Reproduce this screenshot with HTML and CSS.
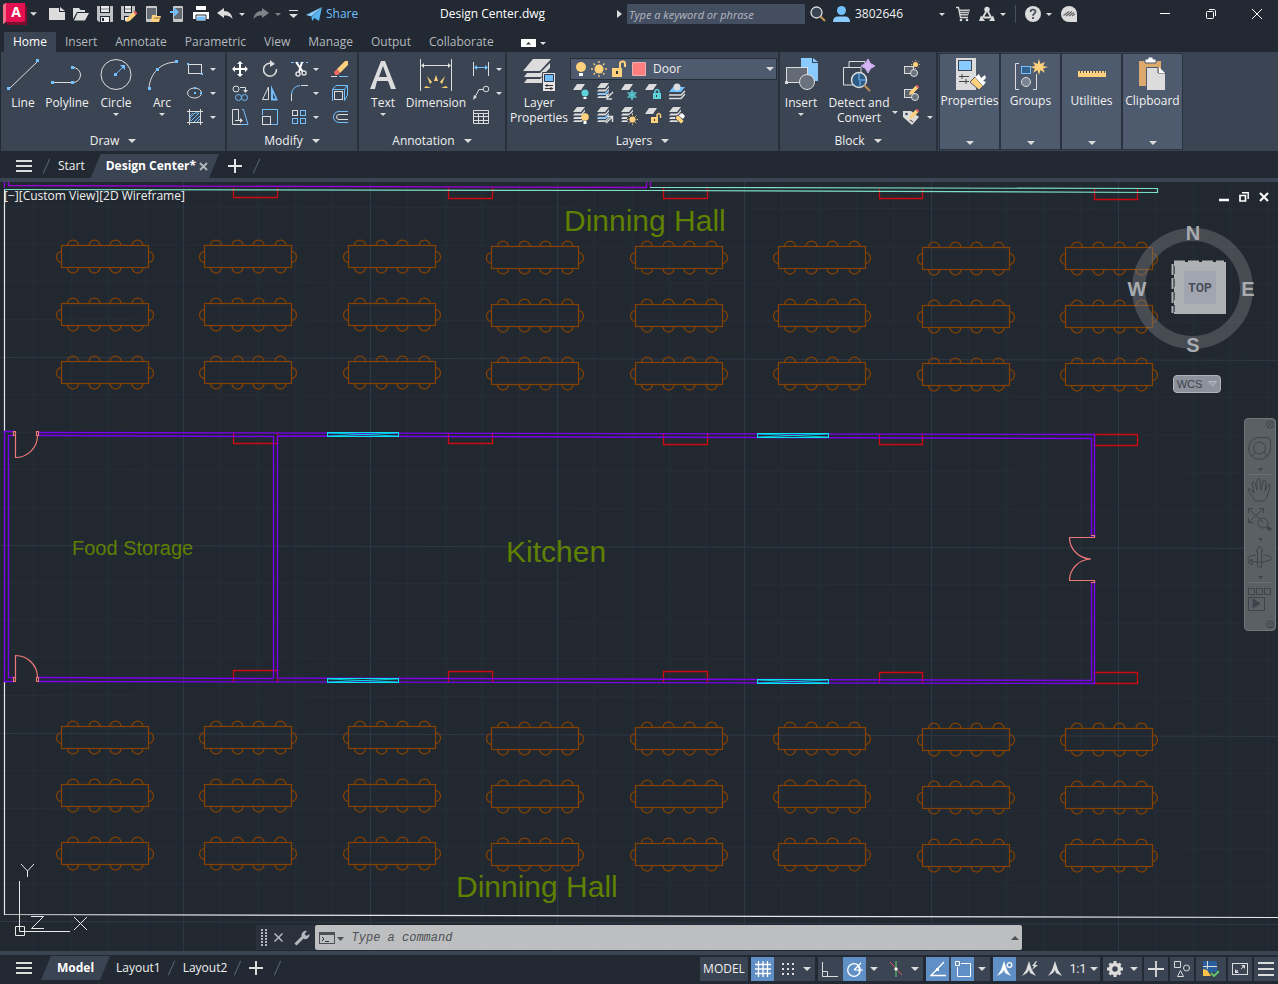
FILE: index.html
```html
<!DOCTYPE html>
<html lang="en">
<head>
<meta charset="utf-8">
<title>Design Center.dwg</title>
<link rel="stylesheet" href="styles.css">
</head>
<body>
<svg class="defs" aria-hidden="true">
  <defs>
    <symbol id="caret" viewBox="0 0 8 4"><path d="M0 0H8L4 4Z" fill="#dcdcdc"/></symbol>
    <symbol id="sheet" viewBox="0 0 12 6"><path d="M4 0H12L8 6H0Z"/></symbol>
    <symbol id="sheets" viewBox="0 0 13 15"><path d="M4 0H12L8 5H0ZM0 8.500L1.500 6.500H8.500L12 2.500V4.500L8.500 8.500ZM0 12L1.500 10H8.500L12 6V8L8.500 12ZM0 15L1.500 13.200H8.500L12 9.500V11L8.500 15Z" fill="#dcdcdc"/></symbol>
    <symbol id="sun" viewBox="0 0 16 16"><circle cx="8" cy="8" r="4.500" fill="#ffd17c"/><path d="M8 0V2M8 14V16M0 8H2M14 8H16M2.500 2.500L4 4M12 12L13.500 13.500M13.500 2.500L12 4M4 12L2.500 13.500" stroke="#ffd17c" stroke-width="1.300"/></symbol>
    <symbol id="pencil" viewBox="0 0 12 12"><path d="M0 12L1 8L8 1L11 4L4 11Z" fill="#ffd17c"/><path d="M8 1L9 0H10L12 2V3L11 4Z" fill="#ee5c64"/></symbol>
    <g id="table" fill="none" stroke="#864200" stroke-width="1.250">
      <rect x="61.500" y="245.500" width="87" height="22"/>
      <path d="M67.500 245.500A5.500 5.500 0 0 1 78.500 245.500M89 245.500A5.500 5.500 0 0 1 100 245.500M110 245.500A5.500 5.500 0 0 1 121 245.500M132 245.500A5.500 5.500 0 0 1 143 245.500M67.500 267.500A5.500 5.500 0 0 0 78.500 267.500M89 267.500A5.500 5.500 0 0 0 100 267.500M110 267.500A5.500 5.500 0 0 0 121 267.500M132 267.500A5.500 5.500 0 0 0 143 267.500M61.500 251.500A5 5.500 0 0 0 61.500 262.500M148.500 251.500A5 5.500 0 0 1 148.500 262.500"/>
    </g>
    <g id="tablerow">
      <use href="#table"/><use href="#table" x="143"/><use href="#table" x="287"/><use href="#table" x="430" y="1"/>
      <use href="#table" x="574" y="1"/><use href="#table" x="717" y="1"/><use href="#table" x="861" y="2"/><use href="#table" x="1004" y="2"/>
    </g>
    <g id="window" fill="none" stroke="#00e5f0">
      <rect x="327.500" y="432.500" width="71" height="4"/><path d="M328 433L398 436M328 436L398 433" stroke-width=".8"/>
    </g>
    <pattern id="grid" width="187" height="188" patternUnits="userSpaceOnUse" x="183" y="169">
      <path d="M37.500 0V188M75.500 0V188M112.500 0V188M149.500 0V188M0 37.500H187M0 75.500H187M0 112.500H187M0 150.500H187" stroke="#262d38" fill="none"/>
      <path d="M.5 0V188M0 .5H187" stroke="#2f3747" fill="none"/>
    </pattern>
  </defs>
</svg>

<header class="titlebar">
  <button class="split logo" aria-label="Application menu">
    <svg width="24" height="23" viewBox="0 0 24 23"><path d="M2 3H24V22H4Z" fill="#7c0e31"/><path d="M0 2L3 0V19L0 21Z" fill="#f4788c"/><path d="M3 0H22V18L19 19H0Z" fill="#e51050"/><path d="M0 2L3 0V18L0 20Z" fill="#ee6f88"/><text x="13" y="14" text-anchor="middle" class="logo-letter">A</text></svg>
    <svg class="caret"><use href="#caret"/></svg>
  </button>
  <div class="quick">
    <button aria-label="New"><svg class="i16" viewBox="0 0 16 16"><path d="M0 2H10V6H16V14H0Z" fill="#dcdcdc"/><path d="M11 1L16 5H11Z" fill="#dcdcdc"/></svg></button>
    <button aria-label="Open"><svg class="i16" viewBox="0 0 16 16"><path d="M0 2H6L7.500 4H12V6H4L0 13Z" fill="#dcdcdc"/><path d="M4.500 7H16L12 14.500H1Z" fill="#dcdcdc"/></svg></button>
    <button aria-label="Save"><svg class="i16" viewBox="0 0 16 16"><path d="M0 0H3V7H13V0H16V16H2L0 14Z" fill="#bfc1c4"/><path d="M4 0H12V6H4Z" fill="#e9e9e9"/><path d="M4 3H12" stroke="#7a7f86"/><path d="M3 10H13V16H3Z" fill="#222933"/><path d="M4 11H12V16H4Z" fill="#eee"/><path d="M5 12H7V15H5Z" fill="#222933"/></svg></button>
    <button aria-label="Save as"><svg class="i16" viewBox="0 0 16 16"><path d="M0 0H3V7H11V0H14V8L7 14H0Z" fill="#bfc1c4"/><path d="M4 0H10V6H4Z" fill="#e9e9e9"/><path d="M4 3H10" stroke="#7a7f86"/><path d="M3 10H9V15H3Z" fill="#222933"/><path d="M4 11H7V15H4Z" fill="#eee"/><use href="#pencil" x="5" y="5" width="11" height="11"/></svg></button>
    <button aria-label="Open from web and mobile"><svg class="i16" viewBox="0 0 16 16"><rect x="1" y="0" width="11" height="16" rx="1" fill="#c8c8c8"/><rect x="2" y="2" width="9" height="11" fill="#646a72"/><path d="M7 9H11L12 10H16L14 16H6Z" fill="#ffd17c"/><path d="M9 12H15" stroke="#8c6e38"/></svg></button>
    <button aria-label="Save to web and mobile"><svg class="i16" viewBox="0 0 16 16"><rect x="4" y="0" width="10" height="16" rx="1" fill="#c8c8c8"/><rect x="5" y="2" width="8" height="11" fill="#646a72"/><path d="M1 6H8M5 2.500L8.500 6L5 9.500" stroke="#72c0ff" stroke-width="2" fill="none"/></svg></button>
    <button aria-label="Plot"><svg class="i16" viewBox="0 0 16 16"><path d="M3 0H13V4H3ZM0 6H16V13H0Z" fill="#fff"/><path d="M3 9H13V15H3Z" fill="#fff" stroke="#222933"/><path d="M4 10.500H12V14H4Z" fill="#72c0ff"/></svg></button>
    <button class="split" aria-label="Undo"><svg class="i16" viewBox="0 0 16 16"><path d="M0 7L7 2V5C12 5 15 8 15.500 13C13 10 11 9.500 7 9.500V12Z" fill="#dcdcdc"/></svg><svg class="caret"><use href="#caret"/></svg></button>
    <button class="split dim" aria-label="Redo"><svg class="i16" viewBox="0 0 16 16"><path d="M16 7L9 2V5C4 5 1 8 .5 13C3 10 5 9.500 9 9.500V12Z" fill="#dcdcdc"/></svg><svg class="caret"><use href="#caret"/></svg></button>
    <button aria-label="Customize quick access"><svg width="9" height="16" viewBox="0 0 9 16"><path d="M0 4.500H9" stroke="#dcdcdc"/><path d="M0 8H9L4.500 12Z" fill="#dcdcdc"/></svg></button>
    <button class="share"><svg class="i16" viewBox="0 0 16 16"><path d="M0 9L16 1L5.500 10.500Z" fill="#89cbff"/><path d="M16 1L13 15L8.500 12L6 15L5.500 11Z" fill="#58b4f0"/></svg>Share</button>
  </div>
  <h1 class="doc">Design Center.dwg</h1>
  <form class="search" role="search">
    <svg width="5" height="8" viewBox="0 0 5 8"><path d="M0 0L5 4L0 8Z" fill="#dcdcdc"/></svg>
    <input type="text" placeholder="Type a keyword or phrase" aria-label="Search">
    <button type="button" aria-label="Find"><svg class="i16" viewBox="0 0 16 16"><circle cx="6.500" cy="6.500" r="5.500" fill="#3b4453" stroke="#dcdcdc" stroke-width="1.300"/><path d="M10.500 10.500L15 15" stroke="#c7965a" stroke-width="2"/></svg></button>
  </form>
  <button class="user"><svg width="18" height="16" viewBox="0 0 18 16"><circle cx="8.500" cy="4.500" r="4.500" fill="#72c0ff"/><path d="M0 16Q0 10.500 5 10.500H12Q17 10.500 17 16Z" fill="#89cbff"/></svg><span>3802646</span><svg class="caret"><use href="#caret"/></svg></button>
  <div class="account">
    <button aria-label="Store"><svg width="14" height="16" viewBox="0 0 14 16"><path d="M0 1.500H2.500L4.500 11.500H12" fill="none" stroke="#dcdcdc" stroke-width="1.300"/><path d="M3 3.500H14L12 9.500H4Z" fill="#c8c8c8"/><path d="M4 5.500H13M4.500 7.500H12" stroke="#555c66"/><circle cx="5" cy="14" r="1.300" fill="#dcdcdc"/><circle cx="11" cy="14" r="1.300" fill="#dcdcdc"/></svg></button>
    <button class="split" aria-label="Apps"><svg class="i16" viewBox="0 0 16 16"><path d="M8 4L3.500 12M8 4L12.500 12M5 11.500H11" stroke="#dcdcdc" stroke-width="1.800"/><circle cx="8" cy="3.500" r="2.700" fill="#dcdcdc"/><path d="M0 15L2 9.500L6 15ZM16 15L14 9.500L10 15Z" fill="#dcdcdc"/></svg><svg class="caret"><use href="#caret"/></svg></button>
    <span class="rule"></span>
    <button class="split" aria-label="Help"><svg class="i16" viewBox="0 0 16 16"><circle cx="8" cy="8" r="8" fill="#dcdcdc"/><path d="M5.500 6C5.500 2.700 10.500 2.700 10.500 5.800C10.500 7.600 8 7.600 8 9.700M8 11V13" fill="none" stroke="#414854" stroke-width="1.700"/></svg><svg class="caret"><use href="#caret"/></svg></button>
    <button aria-label="Feedback"><svg class="i16" viewBox="0 0 16 16"><path d="M8 0A8 8 0 0 0 8 16H16V8A8 8 0 0 0 8 0Z" fill="#dcdcdc"/><path d="M2.500 9.500L8 5.500M5 10L11 5.500M8 10L13 6.500M11 10L14 8" fill="none" stroke="#666" stroke-width="1.200"/></svg></button>
  </div>
  <div class="winctl">
    <button aria-label="Minimize"><svg width="12" height="12" viewBox="0 0 12 12"><path d="M1 5.500H11" stroke="#fff"/></svg></button>
    <button aria-label="Restore"><svg width="12" height="12" viewBox="0 0 12 12"><rect x="1.500" y="3.500" width="7" height="7" rx="1" fill="none" stroke="#fff"/><path d="M4 1.500H9.500L10.500 2.500V8" fill="none" stroke="#fff"/></svg></button>
    <button aria-label="Close"><svg width="12" height="12" viewBox="0 0 12 12"><path d="M1 1L11 11M11 1L1 11" stroke="#fff"/></svg></button>
  </div>
</header>

<nav class="tabs">
  <a href="#" class="active">Home</a><a href="#">Insert</a><a href="#">Annotate</a><a href="#">Parametric</a><a href="#">View</a><a href="#">Manage</a><a href="#">Output</a><a href="#">Collaborate</a>
  <button class="split" aria-label="Minimize ribbon"><svg width="15" height="8" viewBox="0 0 15 8"><path d="M0 0H15V8H0Z" fill="#fff"/><path d="M5 5.500H10L7.500 3Z" fill="#333"/></svg><svg class="caret tiny"><use href="#caret"/></svg></button>
</nav>

<main class="ribbon">
  <section class="panel draw">
    <div class="tools">
      <button class="big w44"><svg class="i36" viewBox="0 0 36 36"><path d="M4 32L33 4" class="s"/><path d="M2 30H5V33H2ZM31 2H34V5H31Z" class="fb"/></svg>Line</button>
      <button class="big w44"><svg class="i36" viewBox="0 0 36 36"><path d="M3 25.500H24M24 10.500A7.500 7.500 0 0 1 24 25.500" class="s"/><path d="M2 24H5V27H2ZM22 24H25V27H22ZM22 9H25V12H22Z" class="fb"/></svg>Polyline</button>
      <button class="big w54"><svg class="i36" viewBox="0 0 36 36"><circle cx="18" cy="17.500" r="15" class="s"/><path d="M18 17L25 10" class="b"/><path d="M16 16H19V19H16ZM27 8V13L22 8Z" class="fb"/></svg>Circle<svg class="caret tiny"><use href="#caret"/></svg></button>
      <button class="big w38"><svg class="i36" viewBox="0 0 36 36"><path d="M5 31C6 17 16 5 33 5" class="s"/><path d="M4 30H7V33H4ZM12 11H15V14H12ZM31 3H34V6H31Z" class="fb"/></svg>Arc<svg class="caret tiny"><use href="#caret"/></svg></button>
      <div class="small one">
        <button class="split" aria-label="Rectangle"><svg class="i18" viewBox="0 0 18 18"><rect x="2.500" y="4.500" width="13" height="9" class="s"/><path d="M1 3H3V5H1ZM15 13H17V15H15Z" class="fb"/></svg><svg class="caret tiny"><use href="#caret"/></svg></button>
        <button class="split" aria-label="Ellipse"><svg class="i18" viewBox="0 0 18 18"><ellipse cx="8.500" cy="9" rx="7" ry="5" class="s"/><path d="M8 3H10V5H8ZM8 8H10V10H8ZM14 8H16V10H14Z" class="fb"/></svg><svg class="caret tiny"><use href="#caret"/></svg></button>
        <button class="split" aria-label="Hatch"><svg class="i18" viewBox="0 0 18 18"><path d="M4 13V10L9 5H13M5 13L13 5M8 14L14 8M11 14L14 11M4 8L7 5" class="b"/><path d="M1 3.500H17M1 14.500H17M3.500 1V17M14.500 1V17" class="s"/></svg><svg class="caret tiny"><use href="#caret"/></svg></button>
      </div>
    </div>
    <button class="ptitle">Draw<svg class="caret"><use href="#caret"/></svg></button>
  </section>

  <section class="panel modify">
    <div class="tools">
      <div class="small four">
        <button aria-label="Move"><svg class="i18" viewBox="0 0 18 18"><path d="M9 3V15M3 9H15" stroke="#fff" stroke-width="2"/><path d="M9 1L12 4H6ZM9 17L12 14H6ZM1 9L4 6V12ZM17 9L14 6V12Z" fill="#fff"/></svg></button>
        <button aria-label="Rotate"><svg class="i18" viewBox="0 0 18 18"><path d="M11 3.500A6.500 6.500 0 1 0 15.500 9" class="s2"/><path d="M9 0L14 4L9 7Z" class="f"/></svg></button>
        <button class="split" aria-label="Trim"><svg class="i18" viewBox="0 0 18 18"><path d="M0 2.500H17" class="b" stroke-dasharray="3 2"/><path d="M5 2L12 12M11 2L8 12" stroke="#fff" stroke-width="2"/><circle cx="7" cy="14" r="2" class="s2"/><circle cx="13" cy="13" r="2" class="s2"/></svg><svg class="caret tiny"><use href="#caret"/></svg></button>
        <button aria-label="Erase"><svg class="i18" viewBox="0 0 18 18"><path d="M6 9L14 1H17V5L9 13Z" fill="#ffd17c"/><path d="M6 9L9 13L7 15H4L3 12Z" fill="#ee6a64"/><path d="M0 16.500H6" class="s"/><path d="M8 16.500H17" class="b"/></svg></button>
        <button aria-label="Copy"><svg class="i18" viewBox="0 0 18 18"><circle cx="5" cy="5" r="3" class="s"/><circle cx="7.500" cy="13.500" r="3" class="b"/><circle cx="13.500" cy="13.500" r="3" class="b"/><path d="M9 3.500H14.500V7" class="s"/><path d="M12 6H17L14.500 9Z" class="f"/></svg></button>
        <button aria-label="Mirror"><svg class="i18" viewBox="0 0 18 18"><path d="M7.500 3V15.500H1.500Z" class="s"/><path d="M10 1V16.500H17Z" fill="#72c0ff"/><path d="M12 9V14.500H14.500Z" fill="#3b4453"/></svg></button>
        <button class="split" aria-label="Fillet"><svg class="i18" viewBox="0 0 18 18"><path d="M.5 10A9 9 0 0 1 9 1.500" class="b"/><path d="M10 1.500H17M.5 10V17" class="s"/></svg><svg class="caret tiny"><use href="#caret"/></svg></button>
        <button aria-label="Explode"><svg class="i18" viewBox="0 0 18 18"><rect x="3.500" y="7.500" width="8" height="8" class="s"/><path d="M1.500 17V5.500L5 1.500H16.500V11L13.500 16.500V5.500H1.500M13.500 5.500L16 1.500" class="b"/></svg></button>
        <button aria-label="Stretch"><svg class="i18" viewBox="0 0 18 18"><path d="M10 16.500H1.500V1.500H7.500V12" class="s"/><path d="M11 1.500H12.500L17 16.500H10" class="b"/><path d="M4 12.500H10" class="s"/><path d="M9 10L12 12.500L9 15Z" class="f"/></svg></button>
        <button aria-label="Scale"><svg class="i18" viewBox="0 0 18 18"><path d="M1 1.500H16.500V16.500H10M1.500 7V1.500" class="b"/><rect x="1.500" y="8.500" width="8" height="8" class="s"/></svg></button>
        <button class="split" aria-label="Array"><svg class="i18" viewBox="0 0 18 18"><rect x="1.500" y="2.500" width="5" height="5" class="s"/><rect x="9.500" y="2.500" width="5" height="5" class="b"/><rect x="1.500" y="10.500" width="5" height="5" class="b"/><rect x="9.500" y="10.500" width="5" height="5" class="b"/></svg><svg class="caret tiny"><use href="#caret"/></svg></button>
        <button aria-label="Offset"><svg class="i18" viewBox="0 0 18 18"><path d="M17 3.500H8A5.500 5.500 0 0 0 8 14.500H17" class="b"/><path d="M17 6.500H8A2.500 2.500 0 0 0 8 11.500H17" class="s"/></svg></button>
      </div>
    </div>
    <button class="ptitle">Modify<svg class="caret"><use href="#caret"/></svg></button>
  </section>

  <section class="panel annotation">
    <div class="tools">
      <button class="big w44"><svg class="i36" viewBox="0 0 36 36"><path d="M5 32L16 4H20L31 32H26L23 24H12L10 32ZM14 20H22L18 9Z" fill="#dcdcdc" fill-rule="evenodd"/></svg>Text<svg class="caret tiny"><use href="#caret"/></svg></button>
      <button class="big w62"><svg class="i36" viewBox="0 0 36 36"><path d="M2.500 2V34M33.500 2V34M4 8.500H32" class="s"/><path d="M3 8.500L6 6V11ZM33 8.500L30 6V11Z" class="f"/><path d="M18 18L20 24H16ZM9 19L14 25L12 27ZM27 19L22 25L24 27ZM6 31L8 29L13 31ZM30 31L28 29L23 31Z" class="y"/></svg>Dimension</button>
      <div class="small one">
        <button class="split" aria-label="Linear"><svg class="i18" viewBox="0 0 18 18"><path d="M1.500 2V16M16.500 2V16" class="s"/><path d="M3 7.500H15" class="b"/><path d="M2 7.500L5 5V10ZM16 7.500L13 5V10Z" class="fb"/></svg><svg class="caret tiny"><use href="#caret"/></svg></button>
        <button class="split" aria-label="Leader"><svg class="i18" viewBox="0 0 18 18"><circle cx="14" cy="5" r="2.800" class="s"/><path d="M11 5.500H7L2.500 14" class="s"/><path d="M1 16L2 11L5 13Z" class="f"/></svg><svg class="caret tiny"><use href="#caret"/></svg></button>
        <button aria-label="Table"><svg class="i18" viewBox="0 0 18 18"><path d="M1.500 2.500H16.500V15.500H1.500ZM1.500 5.500H16.500M1.500 8.500H16.500M1.500 12.500H16.500M6.500 5.500V15M11.500 5.500V15" class="s"/></svg></button>
      </div>
    </div>
    <button class="ptitle">Annotation<svg class="caret"><use href="#caret"/></svg></button>
  </section>

  <section class="panel layers">
    <div class="tools">
      <button class="big w62"><svg class="i36" viewBox="0 0 36 36"><path d="M12 2H30L19 14H2Z" class="f"/><path d="M3 20L6 16H19L29 6V11L20 20ZM3 26L6 22H19L24 17V26Z" class="f"/><path d="M21.500 15.500H34.500V34.500H21.500Z" fill="#e4e4e4" stroke="#3b4453"/><path d="M23.500 17.500H32.500V24.500H23.500Z" fill="#72c0ff" stroke="#30394a"/><path d="M24 28.500H32M24 31.500H32M26 27V30M30 30V33" stroke="#333"/></svg>Layer<br>Properties</button>
      <div class="laycol">
        <div class="laysel">
          <svg width="80" height="18" viewBox="0 0 80 18"><circle cx="8" cy="7" r="5" fill="#ffd17c"/><path d="M6 13H10V16H6Z" fill="#fff"/><use href="#sun" x="18" y="1" width="16" height="16"/><path d="M39 8H49V17H39Z" fill="#ffd17c"/><path d="M47 8V3.500Q47 1.500 50 1.500Q52 1.500 52 4V7" fill="none" stroke="#ffd17c" stroke-width="2"/><path d="M43 11H45V14H43Z" fill="#333"/><path d="M59.500 2.500H72.500V15.500H59.500Z" fill="#ff7f7f" stroke="#e8b0b0"/></svg>
          <select aria-label="Layer"><option>Door</option><option>Wall</option></select>
          <svg class="caret"><use href="#caret"/></svg>
        </div>
        <div class="laygrid">
          <button aria-label="Layer off"><svg class="i18" viewBox="0 0 18 18"><use href="#sheet" width="12" height="6" x="1" y="1" fill="#dcdcdc"/><circle cx="13" cy="10" r="3.500" fill="#5fd3dc"/><path d="M11.500 14H14.500V16H11.500Z" fill="#fff"/></svg></button>
          <button aria-label="Isolate layer"><svg class="i18" viewBox="0 0 18 18"><use href="#sheets" width="13" height="15" x="1"/><path d="M1.500 11H9L12.500 7.500" class="b" stroke-width="1.500"/><path d="M17 9L11 15M11 11V16H16" class="s2"/></svg></button>
          <button aria-label="Freeze layer"><svg class="i18" viewBox="0 0 18 18"><use href="#sheet" width="12" height="6" x="1" y="1" fill="#dcdcdc"/><path d="M12 7V17M7.500 9.500L16.500 14.500M7.500 14.500L16.500 9.500" stroke="#5fd3dc" stroke-width="1.300"/><circle cx="12" cy="12" r="3" fill="none" stroke="#5fd3dc"/></svg></button>
          <button aria-label="Lock layer"><svg class="i18" viewBox="0 0 18 18"><use href="#sheet" width="12" height="6" x="1" y="1" fill="#dcdcdc"/><path d="M9 10H17V16H9Z" fill="#5fd3dc"/><path d="M11 10V8Q13 5 15 8V10" fill="none" stroke="#5fd3dc" stroke-width="1.500"/><path d="M12.500 12V14" stroke="#333"/></svg></button>
          <button aria-label="Make current"><svg class="i18" viewBox="0 0 18 18"><path d="M5 4H17L13 9H1Z" fill="#72c0ff"/><circle cx="9" cy="4" r="3.500" class="f"/><path d="M1 12H13L17 8M1 15.500H13L17 11" class="s2"/></svg></button>
          <button aria-label="Turn all layers on"><svg class="i18" viewBox="0 0 18 18"><use href="#sheets" width="13" height="15" x="1"/><circle cx="13" cy="10" r="3.800" fill="#ffd17c"/><path d="M11.500 14H14.500V17H11.500Z" fill="#fff"/></svg></button>
          <button aria-label="Unisolate"><svg class="i18" viewBox="0 0 18 18"><use href="#sheets" width="13" height="15" x="1"/><path d="M1.500 11H9L12.500 7.500" class="b" stroke-width="1.500"/><path d="M10 16L16 10M11 9.500H16.500V15" class="s2"/></svg></button>
          <button aria-label="Thaw all layers"><svg class="i18" viewBox="0 0 18 18"><use href="#sheets" width="13" height="15" x="1"/><circle cx="12" cy="12" r="5" fill="#3b4453"/><use href="#sun" x="7" y="7" width="11" height="11"/></svg></button>
          <button aria-label="Unlock layer"><svg class="i18" viewBox="0 0 18 18"><use href="#sheet" width="12" height="6" x="1" y="1" fill="#dcdcdc"/><path d="M7 10H14V16H7Z" fill="#ffd17c"/><path d="M13 10V8Q15 5 16.500 8V11" fill="none" stroke="#ffd17c" stroke-width="1.500"/><path d="M10.500 12V14" stroke="#333"/></svg></button>
          <button aria-label="Match layer"><svg class="i18" viewBox="0 0 18 18"><use href="#sheets" width="13" height="15" x="1"/><path d="M7 11L10 8L16 14L13 17Z" fill="#ffd17c" stroke="#3b4453" stroke-width=".7"/><path d="M11 9L14 6L17 9L15 12Z" fill="#fff"/></svg></button>
        </div>
      </div>
    </div>
    <button class="ptitle">Layers<svg class="caret"><use href="#caret"/></svg></button>
  </section>

  <section class="panel block">
    <div class="tools">
      <button class="big w42"><svg class="i36" viewBox="0 0 36 36"><path d="M18 1H29V6H35V24H18Z" fill="#89cbff"/><path d="M30 1L35 5H30Z" fill="#89cbff"/><rect x="3.500" y="10.500" width="21" height="15" fill="#646b77" stroke="#dcdcdc"/><circle cx="24" cy="25" r="7.500" fill="#6a727e" stroke="#dcdcdc"/><path d="M2 24H5V27H2Z" class="f"/></svg>Insert<svg class="caret tiny"><use href="#caret"/></svg></button>
      <button class="big w74"><svg class="i36" viewBox="0 0 36 36"><path d="M14 28H2.500V10.500H20V16M8 10V4.500H24V8" class="s"/><path d="M14 28H20V17" class="b"/><circle cx="18" cy="23" r="7.500" fill="#2c5b86" stroke="#dcdcdc" stroke-width="1.500"/><path d="M18 16V23H25M19 24V29" class="b"/><path d="M23 28L29 34" stroke="#b98c58" stroke-width="2"/><path d="M27 2Q28.500 7.500 34 9Q28.500 10.500 27 16Q25.500 10.500 20 9Q25.500 7.500 27 2Z" fill="#d6b5f7" stroke="#d6b5f7"/></svg>Detect and<br>Convert</button>
      <svg class="caret tiny mid"><use href="#caret"/></svg>
      <div class="small one">
        <button aria-label="Create block"><svg class="i18" viewBox="0 0 18 18"><rect x="1.500" y="6.500" width="9" height="7" fill="#5d6470" stroke="#dcdcdc"/><circle cx="11" cy="13" r="3.500" fill="#6a727e" stroke="#dcdcdc"/><use href="#sun" x="8" y="0" width="9" height="9"/></svg></button>
        <button aria-label="Edit block"><svg class="i18" viewBox="0 0 18 18"><rect x="1.500" y="5.500" width="9" height="8" fill="#5d6470" stroke="#dcdcdc"/><circle cx="12" cy="13" r="3.500" fill="#6a727e" stroke="#dcdcdc"/><use href="#pencil" x="6" y="1" width="10" height="10"/></svg></button>
        <button class="split" aria-label="Edit attributes"><svg class="i18" viewBox="0 0 18 18"><path d="M0 3H8L16 9L9 17L0 9Z" class="f"/><circle cx="3.500" cy="6" r="1.300" fill="#3b4453"/><path d="M7 12L10 14" stroke="#333"/><use href="#pencil" x="6" y="1" width="10" height="10"/></svg><svg class="caret tiny"><use href="#caret"/></svg></button>
      </div>
    </div>
    <button class="ptitle">Block<svg class="caret"><use href="#caret"/></svg></button>
  </section>

  <button class="tile"><svg class="i36" viewBox="0 0 36 36"><path d="M4 2H24V34H4Z" fill="#dcdcdc"/><rect x="6.500" y="4.500" width="13" height="10" fill="#89cbff" stroke="#3b4453"/><path d="M7 20.500H17M7 25.500H17M10 18V23M14 23V28" stroke="#444"/><path d="M18 26L23 21L31 30L27 34Z" fill="#ffd17c" stroke="#4e5a6e"/><path d="M23 21L27 18L29 22L33 19L34 22L31 25L34 26L31 30Z" fill="#fff"/></svg>Properties<svg class="caret"><use href="#caret"/></svg></button>
  <button class="tile"><svg class="i36" viewBox="0 0 36 36"><path d="M6 7.500H2.500V33.500H6M20 33.500H23.500V18" class="s"/><rect x="8.500" y="10.500" width="9" height="7" fill="#35618d" stroke="#72c0ff"/><circle cx="13" cy="26" r="4.500" fill="#7b8492" stroke="#dcdcdc"/><path d="M26 3L27.500 8L32 6L30 10L35 11L30 12.500L32 17L27.500 14L26 19L24.500 14L20 17L22 12.500L17 11L22 10L20 6L24.500 8Z" fill="#ffd17c"/></svg>Groups<svg class="caret"><use href="#caret"/></svg></button>
  <button class="tile"><svg class="i36" viewBox="0 0 36 36"><path d="M4 15H32V21H4Z" fill="#ffd17c"/><path d="M6.500 14V17M9.500 14V17M12.500 14V17M15.500 14V17M18.500 14V17M21.500 14V17M24.500 14V17M27.500 14V17M30.500 14V17" stroke="#4e5a6e"/></svg>Utilities<svg class="caret"><use href="#caret"/></svg></button>
  <button class="tile"><svg class="i36" viewBox="0 0 36 36"><path d="M4 5H26V30H4Z" fill="#dba96c"/><path d="M10 3H13V1H18V3H21V7H10Z" fill="#fff" stroke="#4e5a6e"/><path d="M11.500 11.500H23V17H30.500V34.500H11.500Z" fill="#dcdcdc" stroke="#4e5a6e"/><path d="M24 11L30 17H24Z" fill="#fff"/></svg>Clipboard<svg class="caret"><use href="#caret"/></svg></button>
</main>

<nav class="filetabs">
  <button class="menu" aria-label="File menu"><svg width="16" height="12" viewBox="0 0 16 12"><path d="M0 1H16M0 6H16M0 11H16" stroke="#dcdcdc" stroke-width="2"/></svg></button>
  <span class="slash"></span>
  <a href="#" class="start">Start</a>
  <span class="current"><a href="#">Design Center*</a><button aria-label="Close tab"><svg width="9" height="9" viewBox="0 0 9 9"><path d="M1 1L8 8M8 1L1 8" stroke="#b4b8bf" stroke-width="1.800"/></svg></button></span>
  <button aria-label="New tab"><svg width="14" height="14" viewBox="0 0 14 14"><path d="M7 0V14M0 7H14" stroke="#e6e6e6" stroke-width="2"/></svg></button>
  <span class="slash"></span>
</nav>

<section class="canvas">
  <svg class="drawing" viewBox="0 182 1278 769" preserveAspectRatio="xMinYMin slice">
    <g transform="skewY(0.13)"><rect y="170" width="2600" height="1600" fill="url(#grid)" shape-rendering="crispEdges"/></g>
    <use href="#tablerow"/><use href="#tablerow" y="58"/><use href="#tablerow" y="116"/>
    <use href="#tablerow" y="481"/><use href="#tablerow" y="539"/><use href="#tablerow" y="597"/>
    <g fill="none" stroke="#cc0a10" stroke-width="1.300">
      <path d="M233.500 188V197.500H277.500V188M448.500 188V198.500H492.500V188M663.500 188V198.500H707.500V188M879.500 189V198.500H922.500V189M1094.500 189V199.500H1137.500V189"/>
      <path d="M233.500 433V443.500H277.500V433M448.500 433V443.500H492.500V433M663.500 433V444.500H707.500V433M879.500 434V444.500H922.500V434M1094.500 434.500H1137.500V445.500H1094.500Z"/>
      <path d="M233.500 682V670.500H277.500V682M448.500 682V671.500H492.500V682M663.500 682V671.500H707.500V682M879.500 683V672.500H922.500V683M1094.500 672.500H1137.500V683.500H1094.500Z"/>
    </g>
    <path d="M4.500 190V431M4.500 682V914.500L1278 917.500" fill="none" stroke="#e4e6e8" stroke-width="1.200"/>
    <g fill="none" stroke="#9a00d8" stroke-width="1.300"><path d="M4.500 182V188M8.500 182V185.500L646.500 187.500V182M650.500 182V187"/></g>
    <path d="M4 189.500L650 190.500M650 187.500L1157.500 188.500V192.500L650 190.500" fill="none" stroke="#7be0c8" stroke-width="1.200"/>
    <g fill="none" stroke="#7a00ee" stroke-width="1.400">
      <path d="M14 431.500H4.500V681.500H14M14 435.500H8.500V677.500H14M38 432.500L1094.500 434.500V537M38 435.500L273.500 436.500V678M277.500 436V678L1091.500 680.500V582M277 436L1091.500 438.500V537M38 677.500L273.500 678.500M38 681.500L1094.500 683.500V582"/>
    </g>
    <use href="#window"/><use href="#window" x="430" y="1"/><use href="#window" y="246"/><use href="#window" x="430" y="247"/>
    <g fill="none" stroke="#f07878" stroke-width="1.200">
      <path d="M13.500 431.500H15.500V435.500H13.500ZM36.500 431.500H38.500V435.500H36.500ZM15.500 435.500V457.500A22 22 0 0 0 37.500 435.500"/>
      <path d="M13.500 677.500H15.500V681.500H13.500ZM36.500 677.500H38.500V681.500H36.500ZM15.500 677V655.500A22 22 0 0 1 37.500 677"/>
      <path d="M1091 535.500H1094.500V537.500H1069.500A22 21.500 0 0 0 1091 559A22 21.500 0 0 0 1069.500 580.500H1094.500V582.500H1091"/>
    </g>
    <g class="rooms">
      <text x="564" y="231">Dinning Hall</text><text x="456" y="897">Dinning Hall</text><text x="506" y="562">Kitchen</text><text x="72" y="555" class="lesser">Food Storage</text>
    </g>
    <g fill="none" stroke="#e8e8e8"><path d="M19.500 881V931.500H70M15.500 926.500H24.500V935.500H15.500ZM21 864L27.500 871L34 864M27.500 871V877M31 916.500H43.500L31.500 928.500H44M74 917L87 930M87 917L74 930"/></g>
  </svg>
  <p class="viewlabel">[−][Custom View][2D Wireframe]</p>
  <div class="viewctl">
    <button aria-label="Minimize view"><svg width="10" height="10" viewBox="0 0 10 10"><path d="M0 8H10" stroke="#fff" stroke-width="2.500"/></svg></button>
    <button aria-label="Restore view"><svg width="10" height="10" viewBox="0 0 10 10"><path d="M1 3.500H6.500V9H1Z" fill="none" stroke="#fff" stroke-width="1.700"/><path d="M3 .8H9.200V7" fill="none" stroke="#fff" stroke-width="1.400"/></svg></button>
    <button aria-label="Close view"><svg width="10" height="10" viewBox="0 0 10 10"><path d="M1 1L9 9M9 1L1 9" stroke="#fff" stroke-width="2"/></svg></button>
  </div>
  <div class="cube">
    <svg width="136" height="136" viewBox="1122 221 136 136">
      <circle cx="1192.500" cy="288.500" r="54" fill="none" stroke="#7b7f85" stroke-opacity=".42" stroke-width="13"/>
      <path d="M1174 262H1226V314H1174Z" fill="#aeb1b4"/><path d="M1172.500 264V313M1174 261.500H1224" stroke="#aeb1b4" stroke-dasharray="11 3" stroke-width="2"/><path d="M1174.500 266V312" stroke="#555b62" stroke-dasharray="8 5"/>
      <path d="M1184 271H1216V304H1184Z" fill="#a0a5b0"/>
      <text x="1200" y="292" class="top">TOP</text>
      <g class="compass"><text x="1193" y="240">N</text><text x="1193" y="352">S</text><text x="1137" y="296">W</text><text x="1248" y="296">E</text></g>
    </svg>
    <button class="wcs">WCS<svg width="9" height="6" viewBox="0 0 9 6"><path d="M.5 .5H8.500L4.500 5Z" fill="#9a9eab" stroke="#b2b6be"/></svg></button>
  </div>
  <div class="navbar">
    <svg width="32" height="213" viewBox="2 1 32 213" fill="none" stroke="#3d444d">
      <circle cx="27" cy="6.500" r="3.500"/><path d="M25 4.500L29 8.500M29 4.500L25 8.500"/>
      <path d="M17 19.500H24Q27.500 19.500 27.500 24V31A11 11 0 1 1 17 19.500ZM9 38L12.500 34M24.500 38L21 34"/><circle cx="16.500" cy="30" r="6"/>
      <path d="M15 50H20L17.500 53ZM15 120H20L17.500 123ZM15 158H20L17.500 161Z" fill="#3d444d" stroke="none"/>
      <path d="M4 56.500H30M4 164.500H30" stroke="#6b7075"/>
      <path d="M12 83C9 77 5 74 5 71Q8 70 11 75L9 65Q10 62 12 65L14 72L14 62Q16 59 17 62L18 72L20 63Q22 61 23 64L22 73L25 67Q28 66 27 69L24 79L21 83Z"/>
      <path d="M6 91L20 104M20 91L6 104M5.500 95V90.500H10M16 90.500H20.500V95M5.500 100V104.500H10"/><circle cx="20" cy="105" r="5"/><path d="M24 109L28 112" stroke-width="3"/>
      <path d="M13 133L16.500 128L20 133H18.500V149H14.500V133ZM13 137C2 138 2 143 14 144H20C31 142 31 138 20 137M9 141V147L5 144Z"/>
      <path d="M5.500 170.500H11.500V176.500H5.500ZM13.500 170.500H19.500V176.500H13.500ZM21.500 170.500H27.500V176.500H21.500ZM5.500 179.500H21.500V192.500H5.500Z"/><path d="M10 181V190L17 185.500Z" fill="#3d444d"/>
      <circle cx="27" cy="206.500" r="3.500"/><path d="M25 206H29M25.500 208L27 209.500L28.500 208"/>
    </svg>
  </div>
  <div class="command">
    <div class="grip">
      <svg width="6" height="18" viewBox="0 0 6 18"><path d="M1 0V18M5 0V18" stroke="#b4b8bf" stroke-width="2" stroke-dasharray="2 1"/></svg>
      <button aria-label="Close command line"><svg width="9" height="9" viewBox="0 0 9 9"><path d="M.5 .5L8.500 8.500M8.500 .5L.5 8.500" stroke="#b4b8bf" stroke-width="1.500"/></svg></button>
      <button aria-label="Customize"><svg class="i16" viewBox="0 0 16 16"><path d="M1.500 14.500L10 6" stroke="#b4b8bf" stroke-width="3"/><path d="M13 1A4.500 4.500 0 0 0 7.500 6L10 9A4.500 4.500 0 0 0 15.500 4L12.500 6L10.500 4Z" fill="#b4b8bf"/></svg></button>
    </div>
    <div class="entry">
      <svg width="26" height="14" viewBox="0 0 26 14"><rect x=".5" y="1.500" width="15" height="11" fill="none" stroke="#4c4f54"/><path d="M1 3H15" stroke="#4c4f54" stroke-width="2"/><path d="M3 6L5 8L3 10M6 10.500H10" stroke="#333" fill="none"/><path d="M18 6H25L21.500 10Z" fill="#4c4f54"/></svg>
      <input type="text" placeholder="Type a command" aria-label="Command">
      <svg width="8" height="4" viewBox="0 0 8 4"><path d="M0 4H8L4 0Z" fill="#4c4f54"/></svg>
    </div>
  </div>
</section>

<footer class="status">
  <nav class="layouts">
    <button class="menu" aria-label="Layout menu"><svg width="16" height="12" viewBox="0 0 16 12"><path d="M0 1H16M0 6H16M0 11H16" stroke="#dcdcdc" stroke-width="2"/></svg></button>
    <a href="#" class="model">Model</a><a href="#" class="lay">Layout1</a><span class="slash"></span><a href="#" class="lay">Layout2</a><span class="slash"></span>
    <button class="plus" aria-label="New layout"><svg width="14" height="14" viewBox="0 0 14 14"><path d="M7 0V14M0 7H14" stroke="#dcdcdc" stroke-width="2"/></svg></button><span class="slash last"></span>
  </nav>
  <div class="modes">
    <button class="m48">MODEL</button>
    <div class="seg"><button class="on" aria-label="Grid"><svg class="i16" viewBox="0 0 16 16"><path d="M3.500 0V16M8 0V16M12.500 0V16M0 3.500H16M0 8H16M0 12.500H16" stroke="#fff" stroke-width="1.300"/></svg></button><button aria-label="Snap"><svg class="i16" viewBox="0 0 16 16"><path d="M2 3H16M2 8H16M2 13H16" stroke="#dcdcdc" stroke-width="2" stroke-dasharray="2 3"/></svg></button><button class="dd" aria-label="Snap options"><svg class="caret"><use href="#caret"/></svg></button></div>
    <div class="seg"><button aria-label="Ortho"><svg class="i16" viewBox="0 0 16 16"><path d="M.5 1V15.500H16M.5 10.500H5.500V15" class="s"/></svg></button><button class="on" aria-label="Polar"><svg class="i16" viewBox="0 0 16 16"><circle cx="7" cy="9" r="6.300" fill="none" stroke="#fff" stroke-width="1.300"/><path d="M7 9L14 2M7 9H16M11 5Q13 7 12 11" stroke="#fff" fill="none" stroke-width="1.200"/></svg></button><button class="dd" aria-label="Polar options"><svg class="caret"><use href="#caret"/></svg></button><button aria-label="Isodraft"><svg class="i16" viewBox="0 0 16 16"><path d="M2 1L14 14" stroke="#e8575c"/><path d="M8 0V16" stroke="#5fd06f"/><path d="M6 8L8 6L10 8L8 10Z" fill="#fff"/></svg></button><button class="dd" aria-label="Isodraft options"><svg class="caret"><use href="#caret"/></svg></button></div>
    <div class="seg"><button class="on" aria-label="Object tracking"><svg class="i16" viewBox="0 0 16 16"><path d="M14 1L1 14.500H16" fill="none" stroke="#fff" stroke-width="1.300"/><path d="M5 9L9 12M6 7H9V10H6Z" fill="#fff"/></svg></button><button class="on" aria-label="Object snap"><svg class="i16" viewBox="0 0 16 16"><path d="M.5 .5H4.500V4.500H.5ZM6 2.500H15.500V15.500H2.500V6" fill="none" stroke="#fff"/></svg></button><button class="dd" aria-label="Snap modes"><svg class="caret"><use href="#caret"/></svg></button></div>
    <div class="seg"><button class="on" aria-label="Annotation visibility"><svg class="i16" viewBox="0 0 16 16"><path d="M7 0L10 9L14 15L8 12L7 9L5 12L0 15L4 9Z" fill="#fff"/><circle cx="12.500" cy="4" r="2.300" fill="none" stroke="#fff" stroke-width="1.300"/></svg></button><button aria-label="Auto scale"><svg class="i16" viewBox="0 0 16 16"><path d="M7 0L10 9L14 15L8 12L7 9L5 12L0 15L4 9ZM14 0L10 5H12L10 9L16 4H13L15 0Z" fill="#dcdcdc"/></svg></button><button aria-label="Annotation scale"><svg class="i16" viewBox="0 0 16 16"><path d="M8 0L11 9L15 15L9 12L8 9L6 12L1 15L5 9Z" fill="#dcdcdc"/></svg></button><button class="scale">1:1<svg class="caret"><use href="#caret"/></svg></button></div>
    <div class="seg"><button aria-label="Workspace"><svg class="i16" viewBox="0 0 16 16"><circle cx="8" cy="8" r="4.500" fill="none" stroke="#dcdcdc" stroke-width="3.500"/><path d="M8 0V3M8 13V16M0 8H3M13 8H16M2.500 2.500L4.500 4.500M11.500 11.500L13.500 13.500M13.500 2.500L11.500 4.500M4.500 11.500L2.500 13.500" stroke="#dcdcdc" stroke-width="3"/></svg></button><button class="dd" aria-label="Workspaces"><svg class="caret"><use href="#caret"/></svg></button></div>
    <button class="m24" aria-label="Annotation monitor"><svg class="i16" viewBox="0 0 16 16"><path d="M8 0V16M0 8H16" stroke="#dcdcdc" stroke-width="1.800"/></svg></button>
    <button class="m24" aria-label="Isolate"><svg class="i16" viewBox="0 0 16 16"><path d="M.5 .5H6.500V6.500H.5ZM6.500 9.500L9.500 15.500H3.500Z" class="s"/><circle cx="12.500" cy="7" r="3" class="s"/></svg></button>
    <button class="m30" aria-label="Performance"><svg class="i16" viewBox="0 0 16 16"><path d="M0 0H12L14 2V11H0Z" fill="#2a5f9e"/><path d="M0 8L4 9L8 15H0Z" fill="#ffc24a"/><path d="M4.500 0V8M0 5.500H14" stroke="#dcdcdc"/><path d="M8 12L11 15L16 10" fill="none" stroke="#5fc46c" stroke-width="2"/></svg></button>
    <button class="m24" aria-label="Clean screen"><svg class="i16" viewBox="0 0 16 16"><rect x=".5" y="2.500" width="15" height="11" class="s"/><path d="M9 4H13V8ZM3 8V12H7Z" class="f"/><path d="M12 5L9 8M4 11L6 9" class="s"/></svg></button>
    <button class="m24" aria-label="Customization"><svg class="i16" viewBox="0 0 16 16"><path d="M0 2H16M0 8H16M0 14H16" stroke="#dcdcdc" stroke-width="2"/></svg></button>
  </div>
</footer>
</body>
</html>
```

FILE: styles.css
```css
* { box-sizing: border-box; }
body {
  margin: 0;
  min-height: 100vh;
  display: flex;
  flex-direction: column;
  background: #222933;
  color: #f0f0f0;
  font: 12px/16px "Open Sans", "Noto Sans", sans-serif;
  overflow-x: hidden;
}
button { background: none; border: 0; padding: 0; color: inherit; font: inherit; display: flex; align-items: center; justify-content: center; flex: none; }
a { color: inherit; text-decoration: none; }
svg { display: block; flex: none; }
input, select { font: inherit; color: inherit; border: 0; outline: 0; }
.defs { position: absolute; width: 0; height: 0; }
.i16 { width: 16px; height: 16px; }
.i18 { width: 18px; height: 18px; }
.i36 { width: 36px; height: 36px; }
.caret { width: 8px; height: 4px; }
.caret.tiny { width: 6px; height: 3px; }
.s { fill: none; stroke: #dcdcdc; }
.s2 { fill: none; stroke: #dcdcdc; stroke-width: 1.5px; }
.b { fill: none; stroke: #72c0ff; }
.f { fill: #dcdcdc; }
.fb { fill: #72c0ff; }
.y { fill: #ffd17c; }
.split { gap: 4px; }
.split .caret { width: 6px; height: 3px; }

/* Title bar */
.titlebar { display: flex; align-items: center; height: 28px; padding-left: 3px; }
.logo-letter { font: bold 14px "Open Sans", sans-serif; fill: #fff; }
.logo { gap: 3px; }
.quick { display: flex; gap: 8px; margin-left: 12px; width: 391px; }
.quick .split { gap: 6px; }
.dim { opacity: .5; }
.split.logo .caret { width: 7px; height: 4px; }
.share { gap: 4px; color: #72c0ff; }
.doc { margin: 0; font: inherit; color: #fff; flex: 1 0 150px; }
.search { display: flex; align-items: center; gap: 5px; }
.search input { width: 178px; height: 20px; padding: 0 2px; background: #444e61; font-style: italic; font-size: 11px; }
.search input::placeholder { color: #b4b8c0; opacity: 1; }
.user { margin-left: 7px; width: 112px; gap: 4px; }
.user span { flex: 1; text-align: left; }
.user .caret { width: 6px; height: 3px; }
.account { display: flex; align-items: center; gap: 9px; margin-left: 11px; }
.account .split { gap: 5px; }
.rule { width: 1px; height: 18px; background: #46505f; }
.winctl { display: flex; gap: 34px; margin: 0 15px 0 82px; }

/* Ribbon tabs */
.tabs { display: flex; height: 24px; padding: 4px 0 0 4px; color: #b4b8be; }
.tabs a { padding: 2px 9px 0; white-space: nowrap; }
.tabs .active { background: #3b4453; color: #fff; }
.tabs button { margin: 4px 0 0 18px; height: 14px; }

/* Ribbon */
.ribbon { display: flex; background: #3b4453; height: 99px; border-left: 1px solid #222933; overflow: hidden; }
.panel { display: flex; flex-direction: column; justify-content: space-between; flex: none; border-right: 2px solid #28303c; padding: 5px 0 2px; }
.draw { width: 226px; }
.modify { width: 132px; }
.annotation { width: 148px; }
.annotation .tools { padding-left: 2px; }
.layers { width: 273px; }
.layers .tools { padding-left: 1px; }
.block { width: 158px; }
.tools { display: flex; align-items: flex-start; }
.big { flex-direction: column; line-height: 15px; justify-content: flex-start; text-align: center; white-space: nowrap; }
.big .i36 { margin-bottom: 2px; }
.big .tiny { margin-top: 3px; }
.w38 { width: 38px; }
.w42 { width: 42px; }
.w44 { width: 44px; }
.w54 { width: 54px; }
.w62 { width: 62px; }
.w74 { width: 74px; }
.small { display: grid; row-gap: 6px; padding-top: 3px; }
.small button { justify-content: flex-start; height: 18px; }
.small .split { gap: 6px; }
.one { padding-left: 5px; }
.four { grid-template-columns: 18px 18px 28px 18px; column-gap: 12px; padding-left: 4px; }
.four .split { gap: 4px; }
.ptitle { gap: 9px; }
.laycol { padding-top: 1px; }
.laysel { display: flex; align-items: center; width: 207px; height: 22px; background: #4e5a6e; border: 1px solid #262e3a; padding: 0 2px; }
.laysel select { flex: 1; appearance: none; background: none; padding: 0; }
.laygrid { display: grid; grid-template-columns: repeat(5, 18px); gap: 6px; padding: 3px 0 0 2px; }
.mid { margin: 54px 0 0 -4px; }
.tile { width: 59px; margin: 2px 0 2px 2px; flex-direction: column; justify-content: flex-start; background: #4e5a6e; outline: 1px solid #2a3240; line-height: 16px; }
.tile .i36 { margin: 2px 0 1px; }
.tile .caret { margin: auto 0 4px; }

/* File tabs */
.filetabs { display: flex; align-items: center; height: 31px; padding: 3px 0 0 16px; border-bottom: 4px solid #3b4453; }
.slash { width: 1px; height: 16px; background: #596273; transform: rotate(24deg); }
.filetabs .slash:nth-of-type(1) { margin-left: 14px; }
.start { margin: 0 6px 0 11px; }
.current { display: flex; align-items: center; gap: 3px; height: 24px; padding: 0 11px 0 15px; margin-right: 9px; background: #3b4453; clip-path: polygon(10px 0, 100% 0, calc(100% - 10px) 100%, 0 100%); color: #fff; font-weight: 700; }
.filetabs > .slash:last-child { margin-left: 14px; }

/* Model space */
.canvas { position: relative; flex: 1; min-height: 400px; background: #212830; overflow: hidden; }
.drawing { position: absolute; inset: 0; width: 100%; height: 100%; }
.rooms { font: 30px "Liberation Sans", Arial, sans-serif; fill: #5f8000; }
.lesser { font-size: 20px; }
.viewlabel { position: absolute; left: 4px; top: 6px; margin: 0; }
.viewctl { position: absolute; right: 9px; top: 10px; display: flex; gap: 10px; }
.cube { position: absolute; right: 20px; top: 39px; display: flex; flex-direction: column; align-items: center; gap: 18px; }
.compass { font: bold 20px "Liberation Sans", Arial, sans-serif; fill: #a8abb0; text-anchor: middle; }
.top { font: bold 12px Roboto, sans-serif; fill: #454c58; text-anchor: middle; }
.wcs { width: 48px; height: 18px; margin-left: 14px; gap: 6px; background: #8d919b; border: 1px solid #b0b3ba; border-radius: 4px; color: #3d434c; font: 11px "Liberation Sans", sans-serif; }
.navbar { position: absolute; right: 2px; top: 236px; background: #5b6065; border: 1px solid #70757a; border-radius: 4px; width: 32px; height: 213px; overflow: hidden; }
.command { position: absolute; left: 20%; right: 20%; bottom: 1px; height: 25px; display: flex; }
.grip { display: flex; align-items: center; width: 59px; padding-left: 5px; background: #2a303c; gap: 7px; }
.grip button + button { margin-left: 4px; }
.entry { flex: 1; display: flex; align-items: center; gap: 7px; padding: 0 3px 0 4px; background: #bcbec0; border-radius: 2px; }
.entry input { flex: 1; min-width: 0; padding: 0; background: none; color: #333; font: italic 12px/16px "Liberation Mono", monospace; }
.entry input::placeholder { color: #4e5156; opacity: 1; }

/* Status bar */
.status { display: flex; justify-content: space-between; height: 33px; border-top: 4px solid #3b4453; }
.layouts { display: flex; align-items: center; height: 26px; padding-left: 16px; }
.model { display: flex; align-items: center; justify-content: center; width: 69px; height: 24px; margin: 0 6px 0 9px; background: #3b4453; clip-path: polygon(10px 0, 100% 0, calc(100% - 10px) 100%, 0 100%); color: #fff; font-weight: 700; }
.layouts .slash { margin-left: 10px; }
.lay + .slash + .lay { margin-left: 11px; }
.plus { margin-left: 11px; }
.layouts .last { margin-left: 14px; }
.modes { display: flex; gap: 2px; padding-top: 2px; height: 26px; }
.modes > * { background: #3b4453; }
.seg { display: flex; gap: 2px; }
.m48 + .seg, .seg + .seg { margin-left: 1px; }
.seg button { width: 23px; height: 24px; }
.seg .dd { width: 16px; margin-left: -2px; }
.seg .on { background: #5f8fc4; }
.seg .scale { width: 32px; gap: 4px; font-family: Roboto, sans-serif; }
.m48 { width: 48px; }
.m24 { width: 24px; }
.m30 { width: 30px; }
```
